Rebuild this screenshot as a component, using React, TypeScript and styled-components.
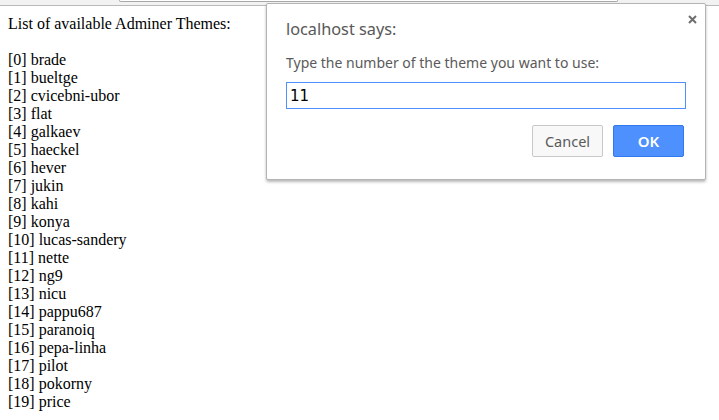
import React from "react";
import styled, { createGlobalStyle } from "styled-components";

const GlobalStyle = createGlobalStyle`
  html, body {
    margin: 0;
    padding: 0;
    background: #ffffff;
  }
  body {
    font-family: "Liberation Serif", "Times New Roman", serif;
    font-size: 16px;
    line-height: 18px;
    color: #000000;
    overflow: hidden;
  }
`;

const Frame = styled.div`
  position: relative;
  width: 719px;
  height: 420px;
  overflow: hidden;
`;

const ChromeStrip = styled.div`
  display: flex;
  height: 5px;
  padding-left: 119px;
  background: #f2f2f2;
  border-bottom: 1px solid #b9b9b9;
`;

const AddressEdge = styled.div`
  width: 497px;
  height: 1px;
  background: #ffffff;
  border: 1px solid #a8a8a8;
  border-top: none;
  border-radius: 0 0 3px 3px;
`;

const Page = styled.div`
  padding: 9px 8px 8px 8px;
`;

const Heading = styled.div`
  margin-bottom: 18px;
`;

const ThemeList = styled.div`
  display: flex;
  flex-direction: column;
`;

const ThemeRow = styled.div`
  height: 18px;
  white-space: nowrap;
`;

const Dialog = styled.div`
  position: absolute;
  left: 266px;
  top: 3px;
  width: 438px;
  height: 175px;
  box-sizing: content-box;
  background: #ffffff;
  border: 1px solid #b4b4b4;
  border-radius: 2px;
  box-shadow: 0 2px 3px rgba(0, 0, 0, 0.28);
  font-family: "Noto Sans", "Open Sans", sans-serif;
  color: #585858;
  display: flex;
  flex-direction: column;
`;

const Body = styled.div`
  display: flex;
  flex-direction: column;
  padding: 15px 19px 0 19px;
`;

const Title = styled.div`
  font-size: 16.3px;
  line-height: 20px;
  letter-spacing: 0;
  color: #575757;
`;

const Label = styled.div`
  margin-top: 15px;
  font-size: 14px;
  line-height: 18px;
  color: #5a5a5a;
  letter-spacing: 0;
`;

const PromptInput = styled.div`
  margin-top: 10px;
  height: 25px;
  border: 1px solid #4d90fe;
  display: flex;
  align-items: center;
  padding-left: 3px;
  box-sizing: content-box;
  width: 395px;
  font-family: "DejaVu Sans", "Noto Sans", sans-serif;
  font-size: 15px;
  color: #000000;
`;

const ButtonRow = styled.div`
  display: flex;
  justify-content: flex-end;
  gap: 10px;
  margin-top: 16px;
  padding-right: 2px;
`;

const Button = styled.div<{ $primary?: boolean }>`
  width: 69px;
  height: 30px;
  display: flex;
  align-items: center;
  justify-content: center;
  border-radius: 2px;
  font-size: ${(p) => (p.$primary ? "15px" : "14.5px")};
  font-weight: ${(p) => (p.$primary ? 600 : 400)};
  color: ${(p) => (p.$primary ? "#ffffff" : "#5a5a5a")};
  background: ${(p) => (p.$primary ? "#4d90fe" : "#f8f8f8")};
  border: 1px solid ${(p) => (p.$primary ? "#3079ed" : "#c8c8c8")};
`;

const CloseButton = styled.div`
  position: absolute;
  right: 8px;
  top: 10px;
  width: 10px;
  height: 10px;
  display: flex;
  align-items: center;
  justify-content: center;
`;

const themes = [
  "brade",
  "bueltge",
  "cvicebni-ubor",
  "flat",
  "galkaev",
  "haeckel",
  "hever",
  "jukin",
  "kahi",
  "konya",
  "lucas-sandery",
  "nette",
  "ng9",
  "nicu",
  "pappu687",
  "paranoiq",
  "pepa-linha",
  "pilot",
  "pokorny",
  "price",
];

export default function App() {
  return (
    <Frame>
      <GlobalStyle />
      <ChromeStrip>
        <AddressEdge />
      </ChromeStrip>
      <Page>
        <Heading>List of available Adminer Themes:</Heading>
        <ThemeList>
          {themes.map((t, i) => (
            <ThemeRow key={t}>
              [{i}] {t}
            </ThemeRow>
          ))}
        </ThemeList>
      </Page>
      <Dialog>
        <CloseButton>
          <svg width="9" height="9" viewBox="0 0 9 9">
            <path d="M1 1 L8 8 M8 1 L1 8" stroke="#6e6e6e" strokeWidth="2" />
          </svg>
        </CloseButton>
        <Body>
          <Title>localhost says:</Title>
          <Label>Type the number of the theme you want to use:</Label>
          <PromptInput>11</PromptInput>
          <ButtonRow>
            <Button>Cancel</Button>
            <Button $primary>OK</Button>
          </ButtonRow>
        </Body>
      </Dialog>
    </Frame>
  );
}
